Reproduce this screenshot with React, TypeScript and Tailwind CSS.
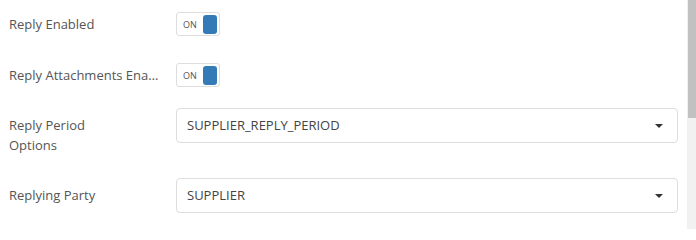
import { ReactNode } from "react";

function Toggle() {
  return (
    <div className="flex h-[24px] w-[44px] items-center justify-between rounded-[3px] border border-[#dddddd] bg-white pl-[6px] pr-[2px]">
      <span className="text-[9px] leading-none text-[#555555]">ON</span>
      <span className="h-[19px] w-[14px] rounded-[3px] bg-[#337ab7]" />
    </div>
  );
}

function Select({ value }: { value: string }) {
  return (
    <div className="flex h-[35px] flex-1 items-center justify-between rounded-[4px] border border-[#dddddd] bg-white pl-[10px] pr-[14px]">
      <span className="text-[13px] text-[#444444]">{value}</span>
      <svg width="8" height="4" viewBox="0 0 8 4" className="text-[#333333]">
        <path d="M0 0h8L4 4z" fill="currentColor" />
      </svg>
    </div>
  );
}

function Row({ label, children, top }: { label: string; children: ReactNode; top: string }) {
  return (
    <div className={`flex items-center ${top}`}>
      <div className="w-[167px] shrink-0 truncate pr-[10px] text-[13px] leading-[20px] text-[#555555]">{label}</div>
      {children}
    </div>
  );
}

export default function App() {
  return (
    <div className="flex h-[229px] w-[696px] overflow-hidden bg-white font-['Open_Sans',sans-serif]">
      <div className="flex flex-1 flex-col px-[9px] pt-[12px]">
        <Row label="Reply Enabled" top="h-[24px]">
          <Toggle />
        </Row>
        <Row label="Reply Attachments Enabled" top="mt-[27px] h-[24px]">
          <Toggle />
        </Row>
        <div className="mt-[21px] flex items-start">
          <div className="w-[167px] shrink-0 pr-[10px] pt-[7px] text-[13px] leading-[20px] text-[#555555]">
            Reply Period
            <br />
            Options
          </div>
          <Select value="SUPPLIER_REPLY_PERIOD" />
        </div>
        <div className="mt-[23px] flex items-start">
          <div className="w-[167px] shrink-0 truncate pr-[10px] pt-[7px] text-[13px] leading-[20px] text-[#555555]">
            Replying Party
          </div>
          <Select value="SUPPLIER" />
        </div>
      </div>
      <div className="w-[9px] shrink-0 bg-[#f1f1f1] pl-[1px]">
        <div className="h-[118px] bg-[#c1c1c1]" />
      </div>
    </div>
  );
}
